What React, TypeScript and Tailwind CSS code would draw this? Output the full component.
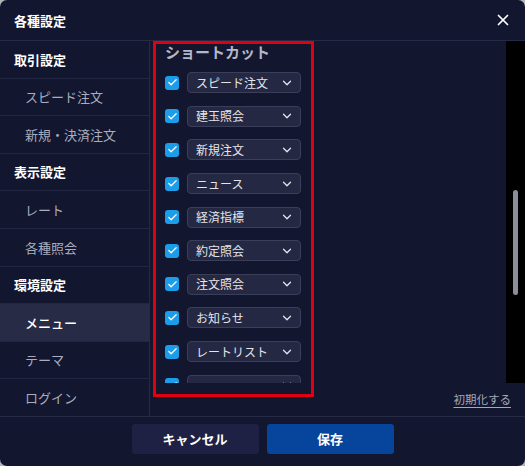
import { Check, ChevronDown, X } from "lucide-react";

const font = { fontFamily: '"Noto Sans CJK JP", "Noto Sans", sans-serif' };

type NavItem = { label: string; head?: boolean; active?: boolean };

const nav: NavItem[] = [
  { label: "取引設定", head: true },
  { label: "スピード注文" },
  { label: "新規・決済注文" },
  { label: "表示設定", head: true },
  { label: "レート" },
  { label: "各種照会" },
  { label: "環境設定", head: true },
  { label: "メニュー", active: true },
  { label: "テーマ" },
  { label: "ログイン" },
];

const shortcuts = [
  "スピード注文",
  "建玉照会",
  "新規注文",
  "ニュース",
  "経済指標",
  "約定照会",
  "注文照会",
  "お知らせ",
  "レートリスト",
  "",
];

export default function App() {
  return (
    <div className="w-[525px] h-[466px] bg-[#b4b4b8]" style={font}>
      <div className="w-full h-full rounded-[7px] bg-[#12162f] flex flex-col overflow-hidden text-white">
        {/* Header */}
        <div className="h-[41px] shrink-0 flex items-center justify-between pl-[14px] pr-[13px] border-b border-[#262a44]">
          <span className="text-[13px] font-bold leading-none">各種設定</span>
          <X size={18} strokeWidth={2.3} className="text-white" />
        </div>

        {/* Body */}
        <div className="flex h-[375px] shrink-0">
          <div className="w-[150px] shrink-0 flex flex-col border-r border-[#262a44]">
            {nav.map((n, i) => (
              <div
                key={n.label}
                className={`flex-1 flex items-center text-[13px] ${
                  i < nav.length - 1 ? "border-b border-[#222640]" : ""
                } ${n.head ? "pl-[14px] font-bold text-white" : "pl-[25px]"} ${
                  n.active ? "bg-[#272b46] text-white font-medium" : n.head ? "" : "text-[#a9adbd]"
                }`}
              >
                {n.label}
              </div>
            ))}
          </div>

          <div className="flex-1 flex flex-col relative">
            <div className="flex h-[342px]">
              <div className="flex-1 overflow-hidden pl-[15px]">
                <div className="h-[22px] leading-[22px] text-[15px] font-bold text-[#b3b7c6]">ショートカット</div>
                <div className="mt-[3px] flex flex-col">
                  {shortcuts.map((s, i) => (
                    <div key={i} className="h-[33.6px] flex items-center gap-[8px] shrink-0">
                      <div className="w-[14px] h-[14px] rounded-[3px] bg-[#1c9de9] flex items-center justify-center">
                        <Check size={11} strokeWidth={2.6} className="text-white" />
                      </div>
                      <div className="w-[114px] h-[21px] rounded-[4px] bg-[#252843] border border-[#3a3e58] flex items-center justify-between pl-[8px] pr-[6px]">
                        <span className="text-[12px] text-[#e4e5ea] leading-none">{s}</span>
                        <ChevronDown size={14} strokeWidth={2.2} className="text-[#e4e5ea]" />
                      </div>
                    </div>
                  ))}
                </div>
              </div>
              <div className="w-[19px] bg-black flex justify-center pt-[149px]">
                <div className="w-[5px] h-[105px] rounded-full bg-[#8b8d99]" />
              </div>
            </div>
            <div className="flex-1 flex items-center justify-end pr-[14px]">
              <span className="text-[11.5px] text-[#a4a8b8] underline underline-offset-[3px]">初期化する</span>
            </div>

            {/* annotation box */}
            <div className="absolute left-[3px] top-0 w-[161px] h-[356px] border-[3px] border-[#e0000f] pointer-events-none" />
          </div>
        </div>

        {/* Footer */}
        <div className="flex-1 border-t border-[#262a44] flex items-start justify-center gap-[8px] pt-[7px]">
          <button className="w-[127px] h-[30px] rounded-[3px] bg-[#1e2143] text-[13px] font-bold text-white">
            キャンセル
          </button>
          <button className="w-[127px] h-[30px] rounded-[3px] bg-[#07449b] text-[13px] font-bold text-white">
            保存
          </button>
        </div>
      </div>
    </div>
  );
}
